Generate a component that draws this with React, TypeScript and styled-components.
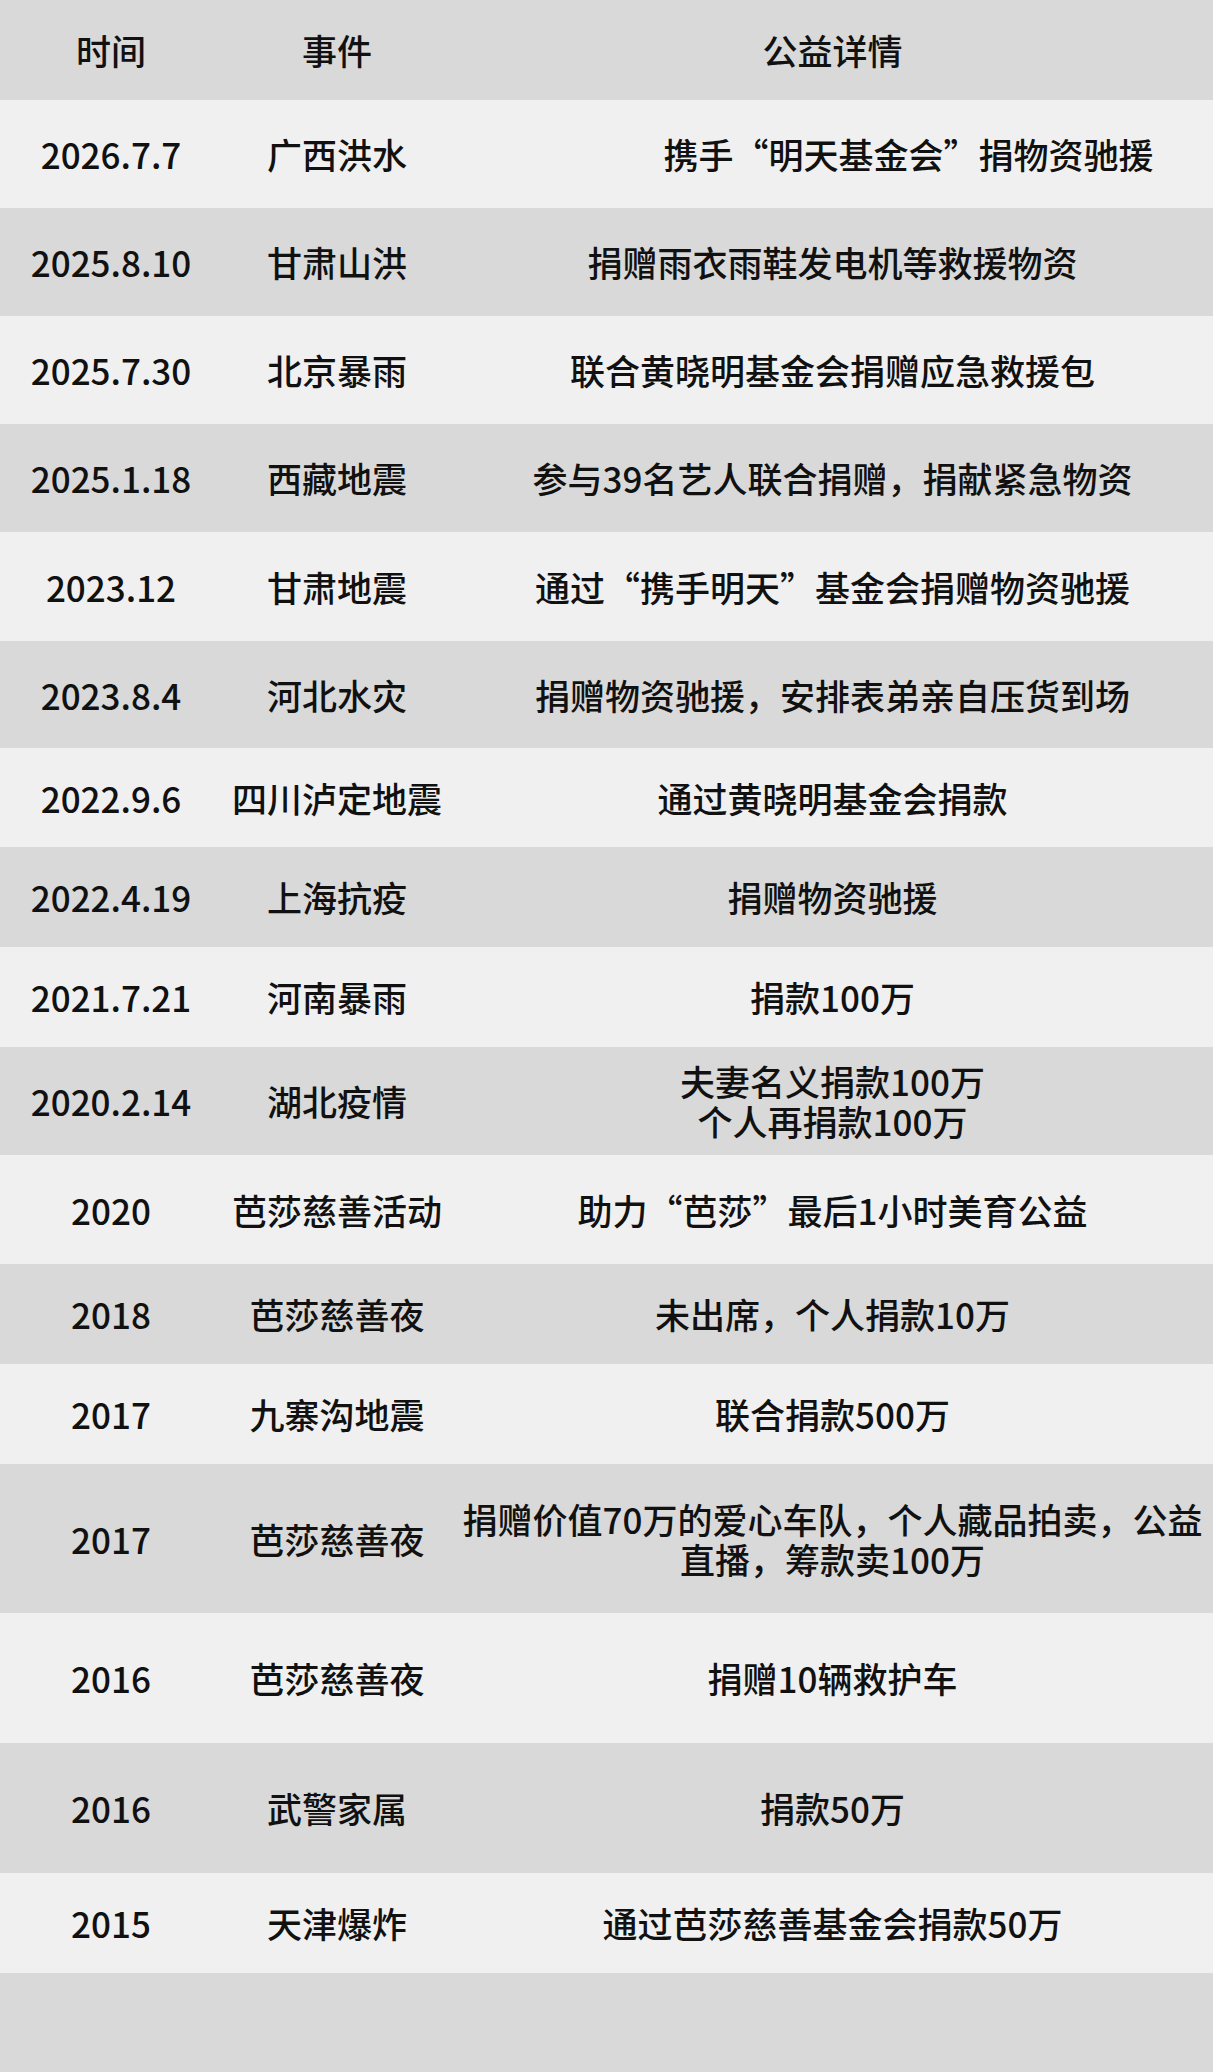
import React from "react";
import styled, { createGlobalStyle } from "styled-components";

const GlobalStyle = createGlobalStyle`
  html, body { margin: 0; padding: 0; background: #d9d9d9; }
  body {
    font-family: "Noto Sans CJK SC", "Noto Sans", "Liberation Sans", sans-serif;
    color: #111;
  }
`;

const Table = styled.div`
  width: 1213px;
  display: flex;
  flex-direction: column;
`;

const Row = styled.div<{ $h: number; $light: boolean }>`
  display: grid;
  grid-template-columns: 222px 230px 1fr;
  height: ${(p) => p.$h}px;
  background: ${(p) => (p.$light ? "#f0f0f0" : "#d9d9d9")};
  align-items: center;
`;

const Cell = styled.div<{ $shift?: number }>`
  display: flex;
  flex-direction: column;
  align-items: center;
  justify-content: center;
  text-align: center;
  font-size: 35px;
  font-weight: 500;
  line-height: 40px;
  white-space: nowrap;
  padding-left: ${(p) => (p.$shift ? p.$shift * 2 : 0)}px;
`;

const Line = styled.span`
  display: block;
  line-height: 40px;
`;

const Footer = styled.div`
  height: 99px;
  background: #d9d9d9;
`;

type Item = { date: string; event: string; detail: string[]; h: number; shift?: number };

const items: Item[] = [
  { date: "2026.7.7", event: "广西洪水", detail: ["携手“明天基金会”捐物资驰援"], h: 108, shift: 76 },
  { date: "2025.8.10", event: "甘肃山洪", detail: ["捐赠雨衣雨鞋发电机等救援物资"], h: 108 },
  { date: "2025.7.30", event: "北京暴雨", detail: ["联合黄晓明基金会捐赠应急救援包"], h: 108 },
  { date: "2025.1.18", event: "西藏地震", detail: ["参与39名艺人联合捐赠，捐献紧急物资"], h: 108 },
  { date: "2023.12", event: "甘肃地震", detail: ["通过“携手明天”基金会捐赠物资驰援"], h: 109 },
  { date: "2023.8.4", event: "河北水灾", detail: ["捐赠物资驰援，安排表弟亲自压货到场"], h: 107 },
  { date: "2022.9.6", event: "四川泸定地震", detail: ["通过黄晓明基金会捐款"], h: 99 },
  { date: "2022.4.19", event: "上海抗疫", detail: ["捐赠物资驰援"], h: 100 },
  { date: "2021.7.21", event: "河南暴雨", detail: ["捐款100万"], h: 100 },
  { date: "2020.2.14", event: "湖北疫情", detail: ["夫妻名义捐款100万", "个人再捐款100万"], h: 108 },
  { date: "2020", event: "芭莎慈善活动", detail: ["助力“芭莎”最后1小时美育公益"], h: 109 },
  { date: "2018", event: "芭莎慈善夜", detail: ["未出席，个人捐款10万"], h: 100 },
  { date: "2017", event: "九寨沟地震", detail: ["联合捐款500万"], h: 100 },
  {
    date: "2017",
    event: "芭莎慈善夜",
    detail: ["捐赠价值70万的爱心车队，个人藏品拍卖，公益", "直播，筹款卖100万"],
    h: 149,
  },
  { date: "2016", event: "芭莎慈善夜", detail: ["捐赠10辆救护车"], h: 130 },
  { date: "2016", event: "武警家属", detail: ["捐款50万"], h: 130 },
  { date: "2015", event: "天津爆炸", detail: ["通过芭莎慈善基金会捐款50万"], h: 100 },
];

export default function App() {
  return (
    <>
      <GlobalStyle />
      <Table lang="zh-CN">
        <Row $h={100} $light={false}>
          <Cell>时间</Cell>
          <Cell>事件</Cell>
          <Cell>公益详情</Cell>
        </Row>
        {items.map((it, i) => (
          <Row key={i} $h={it.h} $light={i % 2 === 0}>
            <Cell>{it.date}</Cell>
            <Cell>{it.event}</Cell>
            <Cell $shift={it.shift}>
              {it.detail.map((l, j) => (
                <Line key={j}>{l}</Line>
              ))}
            </Cell>
          </Row>
        ))}
        <Footer />
      </Table>
    </>
  );
}
